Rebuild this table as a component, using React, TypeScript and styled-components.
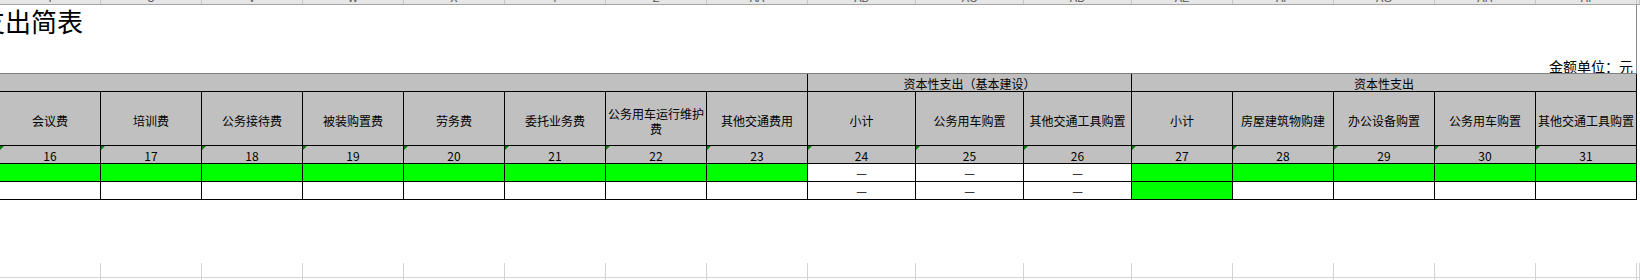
import React from 'react';
import styled, { createGlobalStyle } from 'styled-components';

const GlobalStyle = createGlobalStyle`
  html, body {
    margin: 0;
    padding: 0;
    background: #ffffff;
  }
  body {
    font-family: "Noto Sans CJK SC", "Noto Sans", sans-serif;
    color: #000000;
  }
`;

const GREEN = '#00ff00';
const GRAY = '#c0c0c0';

type Col = {
  letter: string;
  name: string;
  no: number;
  width: number;
  row1: 'green' | 'white' | 'dash';
  row2: 'green' | 'white' | 'dash';
};

const columns: Col[] = [
  { letter: 'T', name: '会议费', no: 16, width: 101, row1: 'green', row2: 'white' },
  { letter: 'U', name: '培训费', no: 17, width: 101, row1: 'green', row2: 'white' },
  { letter: 'V', name: '公务接待费', no: 18, width: 101, row1: 'green', row2: 'white' },
  { letter: 'W', name: '被装购置费', no: 19, width: 101, row1: 'green', row2: 'white' },
  { letter: 'X', name: '劳务费', no: 20, width: 101, row1: 'green', row2: 'white' },
  { letter: 'Y', name: '委托业务费', no: 21, width: 101, row1: 'green', row2: 'white' },
  { letter: 'Z', name: '公务用车运行维护费', no: 22, width: 101, row1: 'green', row2: 'white' },
  { letter: 'AA', name: '其他交通费用', no: 23, width: 101, row1: 'green', row2: 'white' },
  { letter: 'AB', name: '小计', no: 24, width: 108, row1: 'dash', row2: 'dash' },
  { letter: 'AC', name: '公务用车购置', no: 25, width: 108, row1: 'dash', row2: 'dash' },
  { letter: 'AD', name: '其他交通工具购置', no: 26, width: 108, row1: 'dash', row2: 'dash' },
  { letter: 'AE', name: '小计', no: 27, width: 101, row1: 'green', row2: 'green' },
  { letter: 'AF', name: '房屋建筑物购建', no: 28, width: 101, row1: 'green', row2: 'white' },
  { letter: 'AG', name: '办公设备购置', no: 29, width: 101, row1: 'green', row2: 'white' },
  { letter: 'AH', name: '公务用车购置', no: 30, width: 101, row1: 'green', row2: 'white' },
  { letter: 'AI', name: '其他交通工具购置', no: 31, width: 101, row1: 'green', row2: 'white' },
];

const template = columns.map((c) => `${c.width}px`).join(' ');

const Page = styled.div`
  width: 1640px;
  height: 280px;
  overflow: hidden;
  background: #ffffff;
`;

// sheet column header strip, mostly scrolled out of view
const ColumnStrip = styled.div`
  display: grid;
  grid-template-columns: ${template} 1fr;
  height: 5px;
  background: #e6e6e6;
  border-bottom: 1px solid #a6a6a6;
  box-sizing: border-box;
`;

const StripCell = styled.div`
  display: flex;
  align-items: flex-end;
  justify-content: center;
  overflow: hidden;
  border-right: 1px solid #c6c6c6;
  box-sizing: border-box;
  span {
    font-family: "Liberation Sans", Arial, sans-serif;
    font-size: 11px;
    line-height: 11px;
    color: #555555;
  }
`;

const TitleArea = styled.div`
  width: 1637px;
  height: 68px;
  box-sizing: border-box;
  display: flex;
  justify-content: space-between;
  border-right: 1px solid #8a8a8a;
  overflow: hidden;
`;

const Title = styled.div`
  font-size: 26px;
  line-height: 26px;
  padding-top: 3px;
  margin-left: -21px;
  white-space: nowrap;
`;

const Unit = styled.div`
  align-self: flex-end;
  font-size: 14px;
  line-height: 14px;
  padding-right: 3px;
  white-space: nowrap;
`;

const Table = styled.div`
  display: grid;
  grid-template-columns: ${template};
  grid-template-rows: 18px 54px 18px 18px 18px;
  width: 1637px;
  border-top: 1px solid #808080;
  font-size: 12px;
`;

const Cell = styled.div<{ $span?: number; $bg?: string }>`
  grid-column: span ${(p) => p.$span ?? 1};
  box-sizing: border-box;
  border-right: 1px solid #000000;
  border-bottom: 1px solid #000000;
  background: ${(p) => p.$bg ?? '#ffffff'};
  display: flex;
  align-items: center;
  justify-content: center;
  text-align: center;
  position: relative;
`;

const GroupCell = styled(Cell)`
  line-height: 14px;
  padding-top: 2px;
  white-space: nowrap;
`;

const NameCell = styled(Cell)`
  line-height: 15px;
  padding: 4px 1px 0;
`;

const NumCell = styled(Cell)`
  line-height: 12px;
  padding-top: 2px;
  &::before {
    content: '';
    position: absolute;
    left: 0;
    top: 0;
    border-top: 4px solid #008000;
    border-right: 4px solid transparent;
  }
`;

const DataCell = styled(Cell)`
  line-height: 12px;
`;

const Spacer = styled.div`
  height: 63px;
`;

const GridRow = styled.div<{ $h: number }>`
  display: grid;
  grid-template-columns: ${template} 1fr;
  height: ${(p) => p.$h}px;
`;

const GridCell = styled.div`
  box-sizing: border-box;
  border-right: 1px solid #d4d4d4;
  border-bottom: 1px solid #d4d4d4;
`;

const fillFor = (kind: Col['row1']) => (kind === 'green' ? GREEN : '#ffffff');

export default function App() {
  return (
    <Page>
      <GlobalStyle />
      <ColumnStrip>
        {columns.map((c) => (
          <StripCell key={c.letter}>
            <span>{c.letter}</span>
          </StripCell>
        ))}
        <StripCell />
      </ColumnStrip>

      <TitleArea>
        <Title>支出简表</Title>
        <Unit>金额单位：元</Unit>
      </TitleArea>

      <Table>
        <GroupCell $span={8} $bg={GRAY} />
        <GroupCell $span={3} $bg={GRAY}>
          资本性支出（基本建设）
        </GroupCell>
        <GroupCell $span={5} $bg={GRAY}>
          资本性支出
        </GroupCell>

        {columns.map((c) => (
          <NameCell key={`n-${c.no}`} $bg={GRAY}>
            {c.name}
          </NameCell>
        ))}

        {columns.map((c) => (
          <NumCell key={`no-${c.no}`} $bg={GRAY}>
            {c.no}
          </NumCell>
        ))}

        {columns.map((c) => (
          <DataCell key={`a-${c.no}`} $bg={fillFor(c.row1)}>
            {c.row1 === 'dash' ? '—' : ''}
          </DataCell>
        ))}

        {columns.map((c) => (
          <DataCell key={`b-${c.no}`} $bg={fillFor(c.row2)}>
            {c.row2 === 'dash' ? '—' : ''}
          </DataCell>
        ))}
      </Table>

      <Spacer />
      <GridRow $h={15}>
        {columns.map((c) => (
          <GridCell key={`g1-${c.no}`} />
        ))}
        <GridCell />
      </GridRow>
      <GridRow $h={20}>
        {columns.map((c) => (
          <GridCell key={`g2-${c.no}`} />
        ))}
        <GridCell />
      </GridRow>
    </Page>
  );
}
